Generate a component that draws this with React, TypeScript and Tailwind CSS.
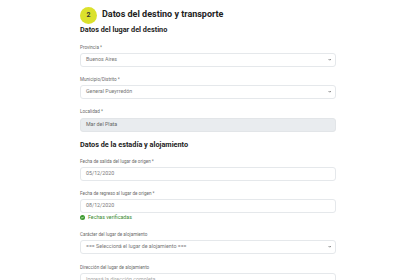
import { ChevronDown } from "lucide-react";

function Label({ children }: { children: React.ReactNode }) {
  return <div className="h-[7px] text-[4.6px] leading-[7px] text-[#6b6b6b]">{children}</div>;
}

function Select({ value }: { value: string }) {
  return (
    <div className="flex h-[14px] items-center justify-between rounded-[3px] border border-[#e5e8eb] bg-white pr-[4px] pl-[5px] text-[5.3px] text-[#777]">
      <span>{value}</span>
      <ChevronDown className="h-[3.5px] w-[3.5px] text-[#555]" strokeWidth={5} />
    </div>
  );
}

function Input({ value, disabled, placeholder }: { value: string; disabled?: boolean; placeholder?: boolean }) {
  return (
    <div
      className={
        "flex h-[14px] items-center rounded-[3px] border px-[5px] text-[5.3px] " +
        (disabled ? "border-[#e2e5e8] bg-[#e9ecef] text-[#666]" : "border-[#e5e8eb] bg-white text-[#777]") +
        (placeholder ? " text-[#aaa]" : "")
      }
    >
      {value}
    </div>
  );
}

export default function App() {
  return (
    <div className="h-[280px] w-[420px] overflow-hidden bg-white font-['Roboto',sans-serif]">
      <div className="ml-[80px] w-[256px]">
        <div className="flex items-center gap-[5px] pt-[7px]">
          <div className="flex h-[17px] w-[17px] items-center justify-center rounded-full bg-[#dbe12c] text-[7px] font-bold text-[#333]">
            2
          </div>
          <div className="-mt-[4px] text-[9px] leading-[12px] font-bold text-[#222]">Datos del destino y transporte</div>
        </div>

        <div className="mt-[1px] h-[10px] text-[7.3px] leading-[10px] font-bold text-[#222]">Datos del lugar del destino</div>

        <div className="mt-[9px]">
          <Label>Provincia *</Label>
          <div className="mt-[2px]">
            <Select value="Buenos Aires" />
          </div>
        </div>
        <div className="mt-[9px]">
          <Label>Municipio/Distrito *</Label>
          <div className="mt-[2px]">
            <Select value="General Pueyrredón" />
          </div>
        </div>
        <div className="mt-[9px]">
          <Label>Localidad *</Label>
          <div className="mt-[3px]">
            <Input value="Mar del Plata" disabled />
          </div>
        </div>

        <div className="mt-[8px] h-[10px] text-[7.3px] leading-[10px] font-bold text-[#222]">
          Datos de la estadía y alojamiento
        </div>

        <div className="mt-[8px]">
          <Label>Fecha de salida del lugar de origen *</Label>
          <div className="mt-[2px]">
            <Input value="05/12/2020" />
          </div>
        </div>
        <div className="mt-[9px]">
          <Label>Fecha de regreso al lugar de origen *</Label>
          <div className="mt-[2px]">
            <Input value="08/12/2020" />
          </div>
        </div>
        <div className="mt-[1px] flex h-[7px] items-center gap-[3px] text-[5.3px] text-[#3b8b2f]">
          <svg viewBox="0 0 16 16" className="h-[5px] w-[5px]">
            <circle cx="8" cy="8" r="8" fill="#3a9a2e" />
            <path d="M4.5 8.3l2.3 2.2 4.7-4.8" stroke="#fff" strokeWidth="2.4" fill="none" />
          </svg>
          Fechas verificadas
        </div>
        <div className="mt-[10px]">
          <Label>Carácter del lugar de alojamiento</Label>
          <div className="mt-[2px]">
            <Select value="=== Seleccioná el lugar de alojamiento ===" />
          </div>
        </div>
        <div className="mt-[10px]">
          <Label>Dirección del lugar de alojamiento</Label>
          <div className="mt-[2px]">
            <Input value="Ingresá la dirección completa" placeholder />
          </div>
        </div>
      </div>
    </div>
  );
}
